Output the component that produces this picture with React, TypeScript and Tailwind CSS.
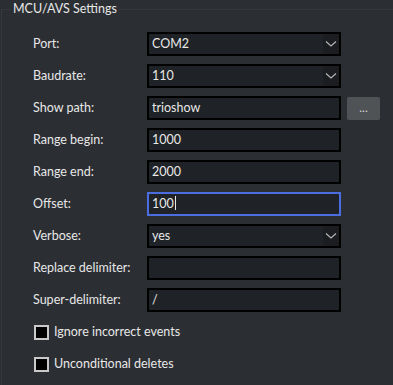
import { useState } from "react";

type Row = { label: string; kind: "select" | "text"; value: string; focused?: boolean; browse?: boolean };

const rows: Row[] = [
  { label: "Port:", kind: "select", value: "COM2" },
  { label: "Baudrate:", kind: "select", value: "110" },
  { label: "Show path:", kind: "text", value: "trioshow", browse: true },
  { label: "Range begin:", kind: "text", value: "1000" },
  { label: "Range end:", kind: "text", value: "2000" },
  { label: "Offset:", kind: "text", value: "100", focused: true },
  { label: "Verbose:", kind: "select", value: "yes" },
  { label: "Replace delimiter:", kind: "text", value: "" },
  { label: "Super-delimiter:", kind: "text", value: "/" },
];

function Chevron() {
  return (
    <svg width="12" height="8" viewBox="0 0 12 8" fill="none">
      <path d="M1 1.5 L6 6 L11 1.5" stroke="#b4b6b8" strokeWidth="1.2" />
    </svg>
  );
}

function Field({ row }: { row: Row }) {
  const border = row.focused ? "border-[#4a6ee0]" : "border-black";
  return (
    <div className={`flex h-[24px] w-[194px] items-center border-2 ${border} bg-[#1f2226]`}>
      <span className="flex-1 pl-[3px] text-[12.5px] text-[#e8e8e8]">
        {row.value}
        {row.focused && <span className="ml-px inline-block h-[14px] w-px translate-y-[2px] bg-[#e8e8e8]" />}
      </span>
      {row.kind === "select" && (
        <span className="flex h-full w-[16px] items-center justify-center bg-[#1b1d21]">
          <Chevron />
        </span>
      )}
    </div>
  );
}

function Check({ label }: { label: string }) {
  const [on, setOn] = useState(false);
  return (
    <button onClick={() => setOn(!on)} className="flex h-[24px] items-center gap-[5px] pl-px text-left">
      <span className="h-[15px] w-[15px] border-2 border-[#c9c9c9] bg-black" />
      <span className="text-[12.5px] text-[#e8e8e8]">{label}</span>
    </button>
  );
}

export default function App() {
  return (
    <div
      className="h-[385px] w-[393px] overflow-hidden bg-[#2b2e32] pl-[1px]"
      style={{ fontFamily: 'Lato, "Noto Sans", sans-serif' }}
    >
      <fieldset className="h-[400px] border border-r-0 border-b-0 border-[#35383c]">
        <legend className="ml-[9px] px-[2px] text-[12.5px] leading-[18px] text-[#e8e8e8]">MCU/AVS Settings</legend>

        <div className="flex flex-col gap-[8px] pl-[31px] pt-[14px]">
          {rows.map((row) => (
            <div key={row.label} className="flex items-center">
              <span className="w-[114px] text-[12.5px] text-[#e8e8e8]">{row.label}</span>
              <Field row={row} />
              {row.browse && (
                <button className="ml-[6px] h-[23px] w-[33px] rounded-[2px] bg-[#505356] text-[12px] leading-[14px] text-[#d8d8d8]">
                  ...
                </button>
              )}
            </div>
          ))}
          <Check label="Ignore incorrect events" />
          <Check label="Unconditional deletes" />
        </div>
      </fieldset>
    </div>
  );
}
